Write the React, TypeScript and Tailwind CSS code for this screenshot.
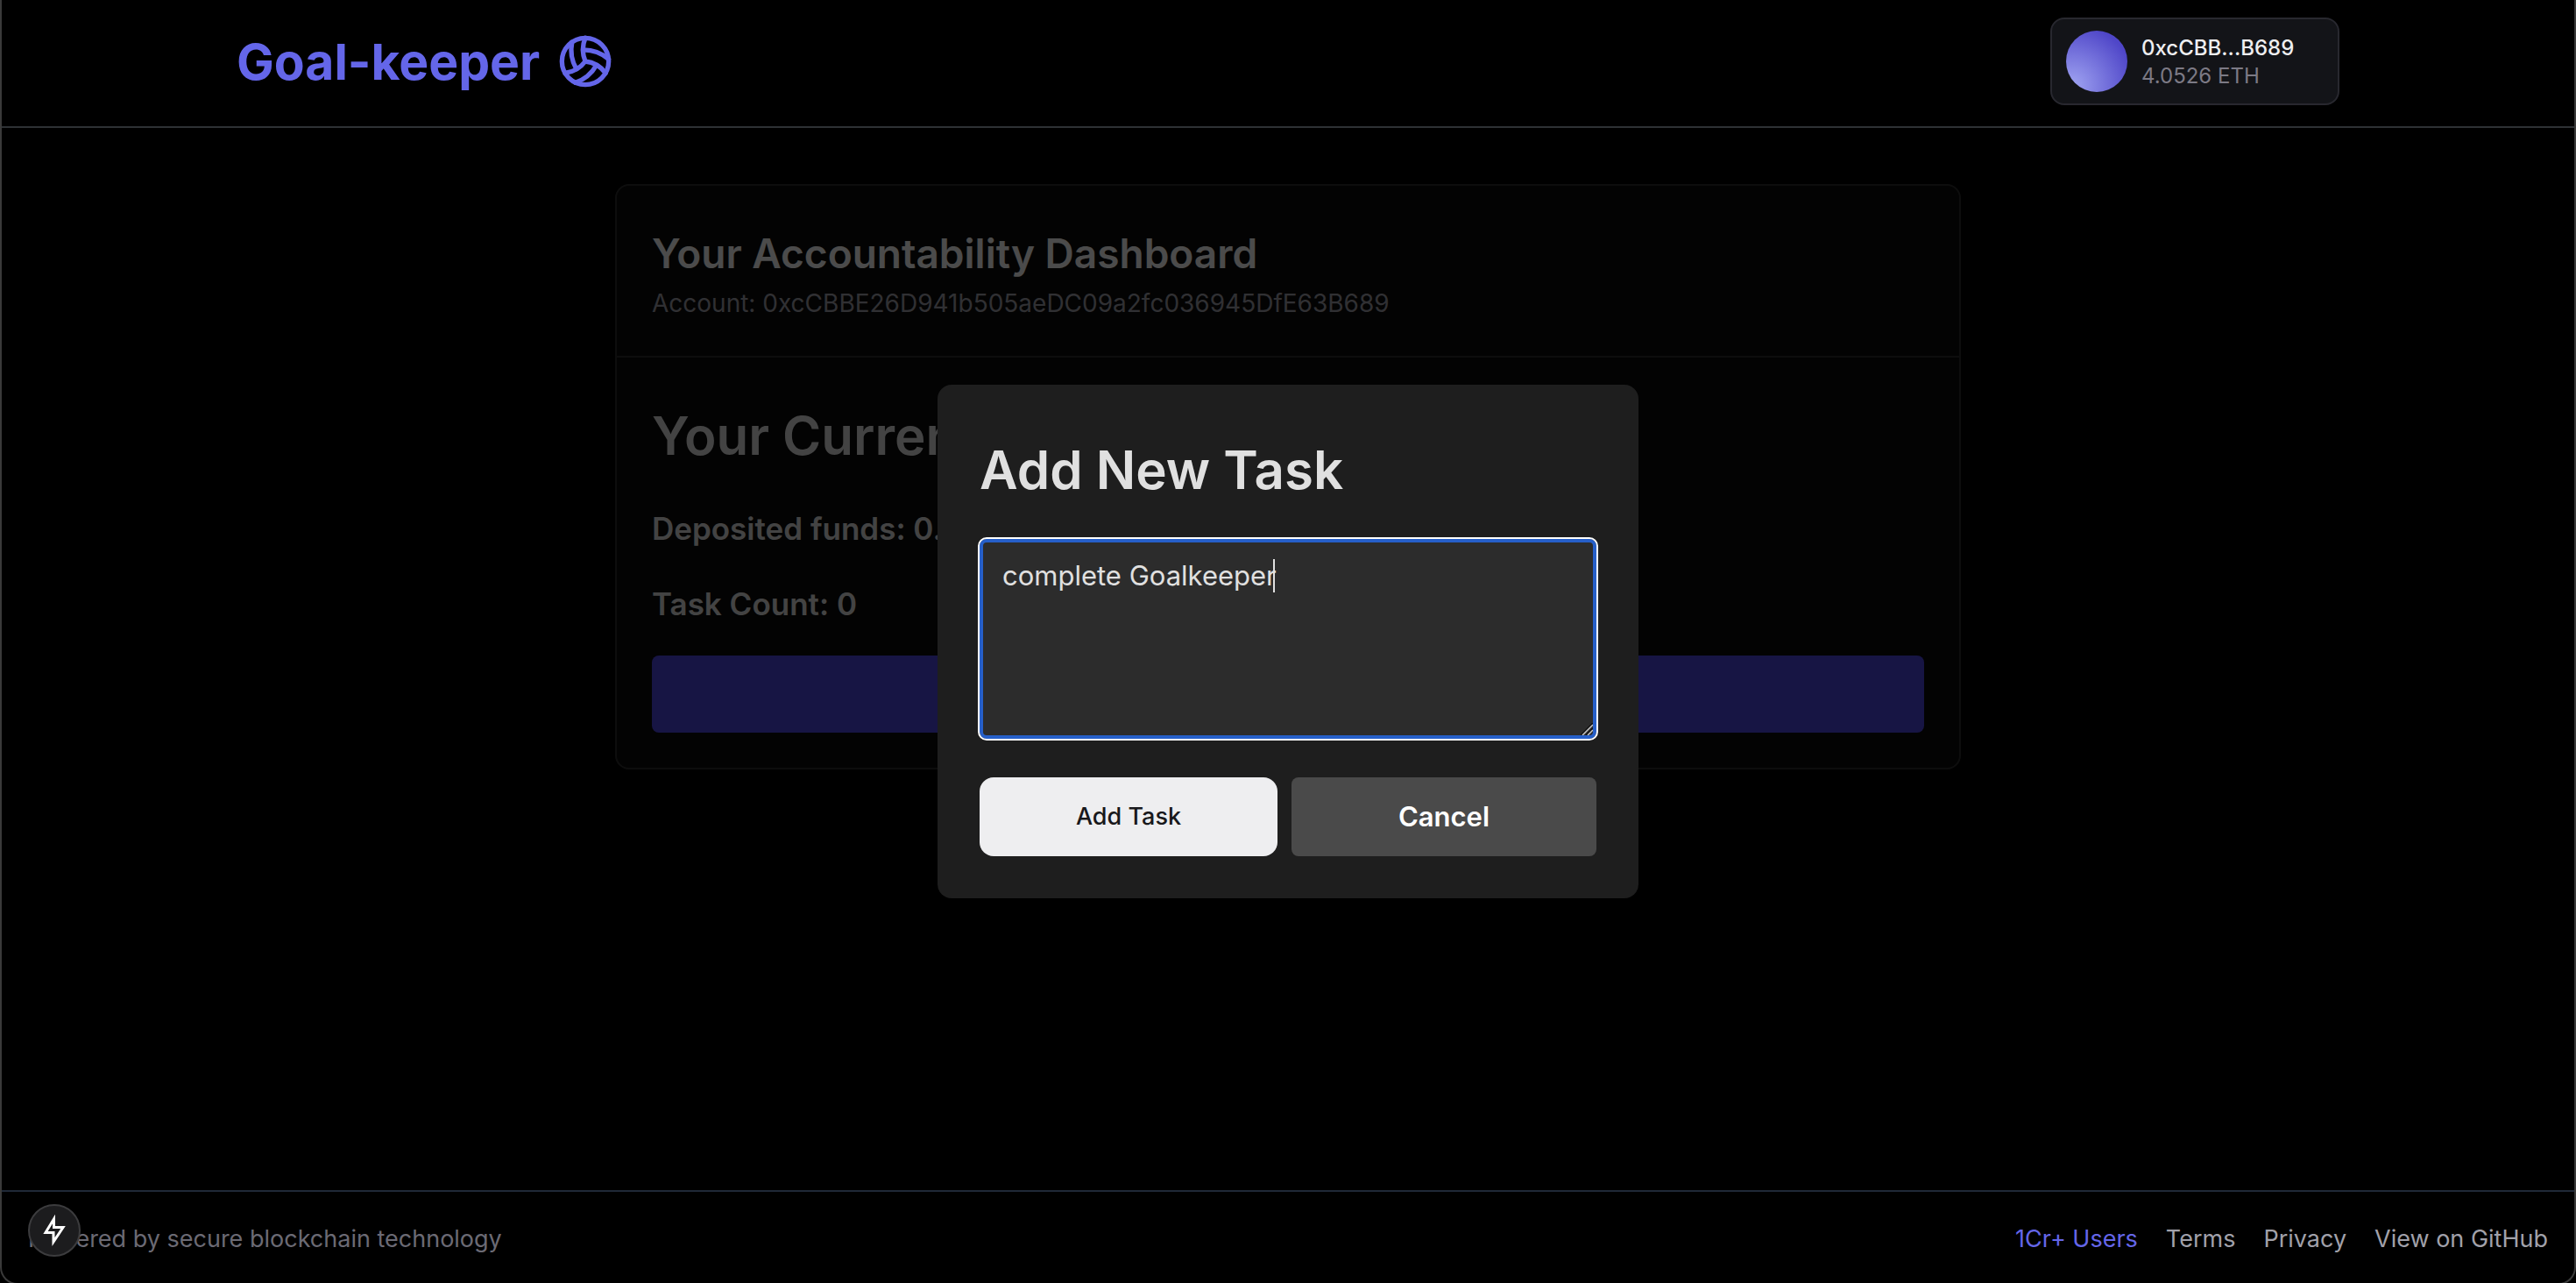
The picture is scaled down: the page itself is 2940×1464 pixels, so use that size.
import React from "react";
import { Volleyball } from "lucide-react";

function Header() {
  return (
    <header className="relative z-20 flex items-center justify-between border-b-2 border-[#2e3135] bg-black px-[270px] pt-5 pb-6">
      <div className="flex items-center gap-5 text-[#6466e9]">
        <h1 className="pt-0.5 text-[57px] leading-[80px] font-bold">Goal-keeper</h1>
        <Volleyball size={64} />
      </div>
      <button
        type="button"
        className="flex h-[100px] w-[330px] items-center gap-4 rounded-2xl border-2 border-[#28282f] bg-[#131418] px-4 text-left"
      >
        <span className="size-[70px] rounded-full bg-radial-[circle_at_10%_90%] from-[#a0a4f2] to-[#4f46c8] to-80%" />
        <span className="flex flex-col pt-0.5 text-2xl leading-8">
          <span className="font-medium text-[#eeeef0]">0xcCBB...B689</span>
          <span className="text-[#7c7a85]">4.0526 ETH</span>
        </span>
      </button>
    </header>
  );
}

function Dashboard() {
  return (
    <section className="mx-auto w-full max-w-[1536px] rounded-2xl border-2 border-[#2e2e2e] bg-[#0a0a0a] text-[#e0e0e0]">
      <div className="border-b-2 border-[#2e2e2e] px-10 pt-12 pb-[38px]">
        <h2 className="text-[46px] leading-[58px] font-semibold text-[#fafafa]">Your Accountability Dashboard</h2>
        <p className="mt-1.5 text-[28px] leading-[44px] text-[#a1a1aa]">Account: 0xcCBBE26D941b505aeDC09a2fc036945DfE63B689</p>
      </div>
      <div className="p-10">
        <h3 className="pt-0.5 text-[60px] leading-[94px] font-semibold">Your Current</h3>
        <p className="mt-8 text-[35px] leading-[54px] font-semibold">Deposited funds: 0.0</p>
        <p className="mt-8 text-[35px] leading-[54px] font-semibold">Task Count: 0</p>
        <button type="button" aria-label="Add task" className="mt-8 block h-[88px] w-full rounded-lg bg-[#4f46e5]" />
      </div>
    </section>
  );
}

function TaskDialog() {
  return (
    <div className="fixed inset-0 z-10 flex items-center justify-center bg-black/70">
      <form role="dialog" aria-labelledby="dialog-title" className="w-full max-w-[800px] rounded-2xl bg-[#1e1e1e] p-12">
        <h2 id="dialog-title" className="pt-0.5 text-[60px] leading-[94px] font-semibold text-[#e0e0e0]">
          Add New Task
        </h2>
        <div className="relative mt-8">
          <textarea
            aria-labelledby="dialog-title"
            defaultValue="complete Goalkeeper"
            className="block h-[228px] w-full resize-none rounded-lg border-4 border-[#265fc9] bg-[#2c2c2c] px-[22px] py-4 text-[31px] leading-[44px] text-[#e0e0e0] caret-transparent outline-2 outline-white"
          />
          <span className="pointer-events-none absolute top-[23px] left-[335px] h-[38px] w-0.5 bg-[#e0e0e0]" />
          <svg viewBox="0 0 14 14" className="pointer-events-none absolute right-1 bottom-1 size-3.5" fill="none" strokeWidth="1.5">
            <path d="M0 14 L14 0 M6 14 L14 6" stroke="#111" />
            <path d="M2 14 L14 2 M8 14 L14 8" stroke="#c8c8c8" />
          </svg>
        </div>
        <div className="mt-11 flex gap-4">
          <button type="button" className="h-[90px] w-[340px] rounded-2xl bg-[#eeeef0] text-[27px] font-medium text-[#18181b]">
            Add Task
          </button>
          <button type="button" className="h-[90px] flex-1 rounded-lg bg-[#4a4a4a] text-[31px] font-semibold text-white">
            Cancel
          </button>
        </div>
      </form>
    </div>
  );
}

function Footer() {
  return (
    <footer className="relative z-20 flex items-center justify-between border-t-2 border-[#1f2937] bg-black px-8 pt-[34px] pb-[30px] text-[27px] leading-[40px]">
      <p className="text-[#6b6a74]">Powered by secure blockchain technology</p>
      <nav className="flex gap-8 text-[#a1a1aa]">
        <a href="#users" className="text-[#6466e9]">1Cr+ Users</a>
        <a href="#terms">Terms</a>
        <a href="#privacy">Privacy</a>
        <a href="#github">View on GitHub</a>
      </nav>
    </footer>
  );
}

export default function App() {
  return (
    <div className="flex min-h-screen flex-col bg-black font-['Inter',sans-serif]">
      <Header />
      <main className="flex-1 px-8 pt-16">
        <Dashboard />
      </main>
      <TaskDialog />
      <Footer />
      <button
        type="button"
        aria-label="Dev tools"
        className="fixed bottom-[30px] left-8 z-30 flex size-[60px] items-center justify-center rounded-full border-2 border-[#3c3c3e] bg-[#1c1c1e]"
      >
        <svg viewBox="0 0 28 36" className="h-9 w-7" fill="none" stroke="white" strokeWidth="3">
          <path d="M13.5 5 L4 20.5 H13 V31 L24 14.5 H13.5 Z" />
        </svg>
      </button>
      <div className="pointer-events-none fixed inset-x-0 top-0 -bottom-0.5 z-40 rounded-b-[20px] border-x-2 border-b-2 border-[#3a3a3a]" />
    </div>
  );
}
